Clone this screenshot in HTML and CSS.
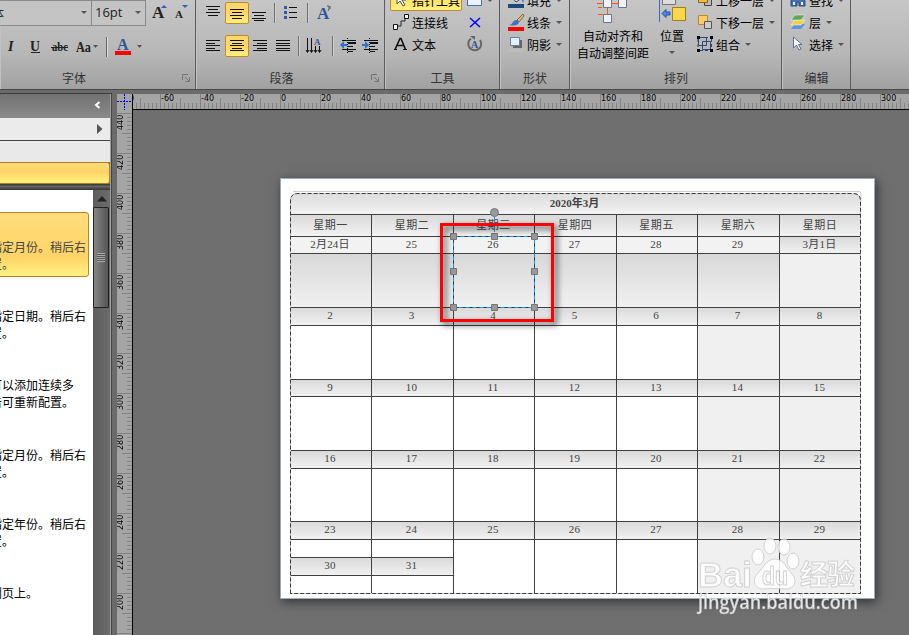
FILE: index.html
```html
<!DOCTYPE html>
<html lang="zh-CN">
<head>
    <meta charset="UTF-8">
    <meta name="viewport" content="width=device-width, initial-scale=1.0">
    <title>2020年3月</title>
    <link rel="stylesheet" href="styles.css">
</head>
<body>
    <!-- Ribbon -->
    <div class="ribbon">
        <div class="group group-font">
            <div class="row row-top">
                <div class="select select-font"><span>体</span><i class="arrow"></i></div>
                <div class="select select-size"><span>16pt</span><i class="arrow"></i></div>
                <svg class="icon-sizes" width="40" height="20">
                    <text x="4" y="15" class="serif-a" font-size="17">A</text>
                    <path d="M13 5l3-3 3 3z" fill="#2b5fc0"/>
                    <text x="27" y="15" class="serif-a" font-size="11">A</text>
                    <path d="M34 2h6l-3 3z" fill="#2b5fc0"/>
                </svg>
            </div>
            <div class="row row-bottom">
                <svg width="195" height="26">
                    <text x="8" y="18" class="serif-a" font-size="14" font-style="italic">I</text>
                    <text x="30" y="18" class="serif-a" font-size="14" textLength="10" lengthAdjust="spacingAndGlyphs">U</text>
                    <path d="M31 19.500h9" stroke="#222"/>
                    <text x="52" y="18" class="serif-a" font-size="12" textLength="16" lengthAdjust="spacingAndGlyphs">abc</text>
                    <path d="M51 14.500h17" stroke="#222"/>
                    <text x="76" y="19" class="serif-a" font-size="14" textLength="15" lengthAdjust="spacingAndGlyphs">Aa</text>
                    <path d="M93 12h5l-2.500 3z" fill="#555"/>
                    <path d="M106.500 4v20" stroke="#666"/>
                    <path d="M107.500 4v20" stroke="#ddd"/>
                    <text x="117" y="17" class="blue-a" font-size="16">A</text>
                    <path d="M115 18h16v4h-16z" fill="#f00"/>
                    <path d="M137 12h5l-2.500 3z" fill="#555"/>
                </svg>
            </div>
            <div class="group-title">字体</div>
            <svg class="launcher" width="8" height="8"><path d="M.5 6V.5H6M3.500 7.500h4v-4M3 3l4 4" stroke="#777" fill="none"/></svg>
        </div>

        <div class="group group-paragraph">
            <div class="row row-top">
                <svg class="tool" width="24" height="22"><path d="M5 4.500h14M7 7.500h10M5 10.500h14M7 13.500h10" stroke="#111"/></svg>
                <svg class="tool active" width="24" height="22"><path d="M4 6.500h14M6 9.500h10M4 12.500h14M6 15.500h10" stroke="#111"/></svg>
                <svg class="tool" width="24" height="22"><path d="M3 10.500h14M5 13.500h10M3 16.500h14M5 18.500h10" stroke="#111"/></svg>
                <i class="divider"></i>
                <svg class="tool tool-list" width="24" height="22"><path d="M10 5.500h8M10 10.500h8M10 15.500h8" stroke="#111"/><path d="M5 4h3v3H5zM5 9h3v3H5zM5 14h3v3H5z" fill="#2e5cb0"/></svg>
                <i class="divider divider-list"></i>
                <svg class="tool tool-fx" width="24" height="22"><text x="4" y="17" class="blue-a" font-size="17">A</text><path d="M14 4h2v3l-1 2M17 4v3" stroke="#555" fill="none"/></svg>
            </div>
            <div class="row row-bottom">
                <svg class="tool" width="24" height="22"><path d="M5 5.500h14M5 8.500h9M5 10.500h14M5 13.500h9M5 15.500h14" stroke="#111"/></svg>
                <svg class="tool active" width="24" height="22"><path d="M4 4.500h14M6 7.500h10M4 9.500h14M6 12.500h10M4 14.500h14" stroke="#111"/></svg>
                <svg class="tool" width="24" height="22"><path d="M4 5.500h14M8 8.500h10M4 10.500h14M8 13.500h10M4 15.500h14" stroke="#111"/></svg>
                <svg class="tool" width="24" height="22"><path d="M3 5.500h14M3 8.500h14M3 10.500h14M3 13.500h14M3 15.500h14" stroke="#111"/></svg>
                <i class="divider"></i>
                <svg class="tool tool-columns" width="24" height="22"><path d="M5.500 3v14M9.500 3v14M13.500 11v6M17.500 11v6M4 15l1.500 2.500L7 15M8 15l1.500 2.500 1.500-2.500M12 15l1.500 2.500 1.500-2.500M16 15l1.500 2.500 1.500-2.500" stroke="#111" fill="none"/><text x="12" y="10" class="blue-a" font-size="9">A</text></svg>
                <i class="divider divider-indent"></i>
                <svg class="tool tool-indent" width="22" height="22"><path d="M8 5.500h14M14 8.500h8M14 11.500h5M8 14.500h14M14 16.500h5" stroke="#111"/><path d="M13.500 3v16" stroke="#111" stroke-dasharray="1 1"/><path d="M14 8h8" stroke="#111" stroke-width="2"/><path d="M6 10l4-4v3h3v2h-3v3z" fill="#2e6fd0"/></svg>
                <svg class="tool tool-indent" width="22" height="22"><path d="M8 5.500h14M14 8.500h8M14 11.500h5M8 14.500h14M14 16.500h5" stroke="#111"/><path d="M13.500 3v16" stroke="#111" stroke-dasharray="1 1"/><path d="M14 8h8" stroke="#111" stroke-width="2"/><path d="M13 10l-4-4v3H6v2h3v3z" fill="#2e6fd0"/></svg>
            </div>
            <div class="group-title">段落</div>
            <svg class="launcher" width="8" height="8"><path d="M.5 6V.5H6M3.500 7.500h4v-4M3 3l4 4" stroke="#777" fill="none"/></svg>
        </div>

        <div class="group group-tools">
            <div class="menus">
                <div class="menu">
                    <div class="item item-active"><svg width="18" height="18"><path d="M5 1v12l3-3 3 5 2-1-3-5h4z" fill="#fff" stroke="#456"/></svg>指针工具</div>
                    <div class="item"><svg width="18" height="18"><path d="M4 13h5V8h4V4h2" stroke="#222" fill="none"/><path d="M1.500 11.500h4v5h-4zM12.500 1.500h4v4h-4z" fill="#fff" stroke="#111"/></svg>连接线</div>
                    <div class="item"><svg width="18" height="18"><path d="M3 14.500L8 3.500h1L13.500 14.500M5 10.500h7" stroke="#111" stroke-width="1.600" fill="none"/><path d="M2 14.500h3M11 14.500h4" stroke="#111"/></svg>文本</div>
                </div>
                <div class="menu menu-extra">
                    <div class="item"><svg width="18" height="18"><path d="M1.500 3.500h14v11h-14z" fill="#eaf2fb" stroke="#4a6d99"/></svg><i class="arrow"></i></div>
                    <div class="item"><svg width="18" height="18"><path d="M4 5l10 9M14 5L4 14" stroke="#00f" stroke-width="1.500"/></svg></div>
                    <div class="item"><svg width="18" height="18"><path d="M5 3.500A6.500 6.500 0 1 0 14 5" stroke="#666" stroke-width="2" fill="none"/><path d="M4 1h5v4z" fill="#666"/><text x="5" y="13" class="blue-a" font-size="10">A</text></svg></div>
                </div>
            </div>
            <div class="group-title">工具</div>
        </div>

        <div class="group group-shape">
            <div class="menus">
                <div class="menu">
                    <div class="item"><svg width="18" height="18"><path d="M5 6l6-4 4 5-6 4z" fill="#eef" stroke="#345"/><path d="M14 6c3 2 3 4 2 6z" fill="#2e6fd0"/><path d="M1 13h16v4H1z" fill="#1f497d"/></svg>填充<i class="arrow"></i></div>
                    <div class="item"><svg width="18" height="18"><path d="M10 7l6-6 1 2-5 6z" fill="#e6b070" stroke="#864"/><path d="M2 12c4 0 3-5 8-5l2 2c-1 4-6 4-10 3z" fill="#3b72c4"/><path d="M1 14h16v4H1z" fill="#f00"/></svg>线条<i class="arrow"></i></div>
                    <div class="item"><svg width="18" height="18"><path d="M6 5h9v8H6z" fill="#666"/><path d="M3.500 2.500h9v8h-9z" fill="#e5efff" stroke="#6a80a0"/><path d="M1 14h16v3H1z" fill="#bcbcbc"/></svg>阴影<i class="arrow"></i></div>
                </div>
            </div>
            <div class="group-title">形状</div>
        </div>

        <div class="group group-arrange">
            <div class="menus">
                <div class="big big-align">
                    <svg width="32" height="26"><path d="M0 3.500h6M14 3.500h8M10.500 7v8M1 7.500h4M1 14.500h5" stroke="#f50"/><path d="M6.500-1.500h8v9h-8zM21.500-1.500h8v9h-8zM6.500 14.500h8v8h-8z" fill="#eef2f8" stroke="#67788f"/></svg>
                    <span>自动对齐和<br>自动调整间距</span>
                </div>
                <div class="big big-place">
                    <svg width="28" height="26"><path d="M1.500 0v22" stroke="#3b6cb5"/><path d="M4.500-2.500h13v7h-13z" fill="#ddd" stroke="#777"/><path d="M4 13.500l4-4v2.500h4v3H8v2.500z" fill="#4a86e8" stroke="#2552a0"/><path d="M14.500 7.500h13v13h-13z" fill="#fbd84b" stroke="#a5800f"/></svg>
                    <span>位置</span>
                    <i class="arrow"></i>
                </div>
                <div class="menu menu-layers">
                    <div class="item"><svg width="18" height="18"><path d="M8.500 7.500h7v7h-7z" fill="#bbb" stroke="#444"/><path d="M2.500 2.500h9v9h-9z" fill="#f7ba42" stroke="#8a6412"/></svg>上移一层<i class="arrow"></i></div>
                    <div class="item"><svg width="18" height="18"><path d="M2.500 2.500h9v9h-9z" fill="#fbcd66" stroke="#b98a2a"/><path d="M8.500 8.500h7v7h-7z" fill="#ccc" stroke="#555"/></svg>下移一层<i class="arrow"></i></div>
                    <div class="item"><svg width="18" height="18"><path d="M2.500 2.500h8v8h-8zM6.500 6.500h8v8h-8z" fill="none" stroke="#2b4a75"/><path d="M2 4v10M4 15.500h10M15.500 4v10M4 2.500h10" stroke="#2b4a75" stroke-dasharray="3 2"/><path d="M1 1h3v3H1zM14 1h3v3h-3zM1 14h3v3H1zM14 14h3v3h-3z" fill="#000"/></svg>组合<i class="arrow"></i></div>
                </div>
            </div>
            <div class="group-title">排列</div>
        </div>

        <div class="group group-edit">
            <div class="menus">
                <div class="menu">
                    <div class="item"><svg width="18" height="18"><path d="M3 4h4v3h3V4h4l2 6v5h-6v-4H8v4H2v-5z" fill="#4470b5" stroke="#28467c"/><path d="M4 11h2v3H4zM12 11h2v3h-2z" fill="#eef"/></svg>查找<i class="arrow"></i></div>
                    <div class="item"><svg width="18" height="18"><path d="M6 11h10l-4 5H2z" fill="#5b93ea"/><path d="M6 7h10l-4 5H2z" fill="#f6cf3c" stroke="#fff" stroke-width=".5"/><path d="M6 2h10l-4 5H2z" fill="#5ca75a" stroke="#fff" stroke-width=".5"/></svg>层<i class="arrow"></i></div>
                    <div class="item"><svg width="18" height="18"><path d="M4.500 2v11l3-3 2.500 5 2-1-2.500-4.500H13z" fill="#fff" stroke="#56708f"/></svg>选择<i class="arrow"></i></div>
                </div>
            </div>
            <div class="group-title">编辑</div>
        </div>
    </div>

    <div class="workspace">
        <!-- Shape library panel -->
        <div class="panel">
            <div class="panel-header"><svg width="8" height="10"><path d="M6.500 2L3 5l3.500 3" stroke="#fff" stroke-width="2" fill="none"/></svg></div>
            <div class="panel-search"><svg width="6" height="10"><path d="M0 0v10l5.500-5z" fill="#555"/></svg></div>
            <div class="panel-space"></div>
            <div class="panel-tab"></div>
            <div class="panel-bar"></div>
            <div class="panel-body">
                <div class="shape-list">
                    <div class="shape-item selected"><p>指定月份。稍后右<br>置。</p></div>
                    <div class="shape-item"><p>指定日期。稍后右<br>置。</p></div>
                    <div class="shape-item"><p>可以添加连续多<br>击可重新配置。</p></div>
                    <div class="shape-item"><p>指定月份。稍后右<br>置。</p></div>
                    <div class="shape-item"><p>指定年份。稍后右<br>置。</p></div>
                    <div class="shape-item"><p>到页上。</p></div>
                </div>
                <div class="scrollbar">
                    <div class="scroll-up"><svg width="10" height="6"><path d="M0 5.500L5 0l5 5.500z" fill="#222"/></svg></div>
                    <div class="scroll-thumb"><i></i></div>
                </div>
            </div>
        </div>

        <div class="side-rail">
            <svg class="origin" width="15" height="16"><path d="M7.500 0v16M0 7.500h15" stroke="#00f" stroke-dasharray="2 1"/></svg>
            <div class="ruler-v">
                <span>440</span><span>420</span><span>400</span><span>380</span><span>360</span><span>340</span><span>320</span>
                <span>300</span><span>280</span><span>260</span><span>240</span><span>220</span><span>200</span><span>180</span>
            </div>
        </div>

        <div class="stage">
            <div class="ruler-h">
                <span class="cut">-80</span><span>-60</span><span>-40</span><span>-20</span><span>0</span><span>20</span><span>40</span><span>60</span><span>80</span>
                <span>100</span><span>120</span><span>140</span><span>160</span><span>180</span><span>200</span><span>220</span>
                <span>240</span><span>260</span><span>280</span><span>300</span>
            </div>
            <div class="canvas">
                <div class="page">
                    <div class="calendar">
                        <div class="month">2020年3月</div>
                        <div class="weekday">星期一</div><div class="weekday">星期二</div><div class="weekday">星期三</div><div class="weekday">星期四</div><div class="weekday">星期五</div><div class="weekday">星期六</div><div class="weekday">星期日</div>

                        <div class="date prev">2月24日</div><div class="date prev">25</div><div class="date prev">26</div><div class="date prev">27</div><div class="date prev">28</div><div class="date prev">29</div><div class="date">3月1日</div>
                        <div class="box prev-box"></div><div class="box prev-box"></div><div class="box prev-box"></div><div class="box prev-box"></div><div class="box prev-box"></div><div class="box prev-box"></div><div class="box weekend"></div>

                        <div class="date">2</div><div class="date">3</div><div class="date">4</div><div class="date">5</div><div class="date">6</div><div class="date">7</div><div class="date">8</div>
                        <div class="box"></div><div class="box"></div><div class="box"></div><div class="box"></div><div class="box"></div><div class="box weekend"></div><div class="box weekend"></div>

                        <div class="date">9</div><div class="date">10</div><div class="date">11</div><div class="date">12</div><div class="date">13</div><div class="date">14</div><div class="date">15</div>
                        <div class="box"></div><div class="box"></div><div class="box"></div><div class="box"></div><div class="box"></div><div class="box weekend"></div><div class="box weekend"></div>

                        <div class="date">16</div><div class="date">17</div><div class="date">18</div><div class="date">19</div><div class="date">20</div><div class="date">21</div><div class="date">22</div>
                        <div class="box"></div><div class="box"></div><div class="box"></div><div class="box"></div><div class="box"></div><div class="box weekend"></div><div class="box weekend"></div>

                        <div class="date">23</div><div class="date">24</div><div class="date">25</div><div class="date">26</div><div class="date">27</div><div class="date">28</div><div class="date">29</div>
                        <div class="box split"><div class="date">30</div></div><div class="box split"><div class="date">31</div></div><div class="box"></div><div class="box"></div><div class="box"></div><div class="box weekend"></div><div class="box weekend"></div>
                    </div>
                    <svg class="calendar-outline" width="573" height="403">
                        <path d="M3 .5h566q2 0 2 2v8" stroke="#ccc" fill="none"/>
                        <path d="M.5 402.500V10q0-7.500 7.500-7.500h555q7.500 0 7.500 7.500v392.500z" stroke="#d0d0d0" fill="none"/>
                        <path d="M.5 402.500V10q0-7.500 7.500-7.500h555q7.500 0 7.500 7.500v392.500z" stroke="#3a3a3a" stroke-dasharray="4 2" fill="none"/>
                    </svg>
                </div>
            </div>
        </div>
    </div>

    <!-- Selected shape and its handles -->
    <svg class="selection" width="92" height="106">
        <path d="M46.500 9v20" stroke="#00a2ff" stroke-dasharray="4 2"/>
        <path d="M5.500 29.500h81v71h-81z" stroke="#333" fill="none"/>
        <path d="M5.500 29.500h81v71h-81z" stroke="#00a2ff" stroke-dasharray="4 3" fill="none"/>
        <circle cx="46.500" cy="5.500" r="4" fill="#999" stroke="#777"/>
        <g fill="#999" stroke="#777">
            <path d="M2.500 26.500h6v6h-6zM43.500 26.500h6v6h-6zM83.500 26.500h6v6h-6z"/>
            <path d="M2.500 61.500h6v6h-6zM83.500 61.500h6v6h-6z"/>
            <path d="M2.500 97.500h6v6h-6zM43.500 97.500h6v6h-6zM83.500 97.500h6v6h-6z"/>
        </g>
    </svg>
    <div class="highlight"></div>

    <!-- Watermark -->
    <svg class="watermark" width="170" height="80">
        <g fill="#fff" stroke="#ccc" stroke-width="1">
            <ellipse cx="63" cy="22" rx="6" ry="8"/>
            <ellipse cx="75" cy="11" rx="6" ry="8"/>
            <ellipse cx="89" cy="12" rx="6" ry="8"/>
            <ellipse cx="98" cy="26" rx="6" ry="8"/>
            <path d="M80 24c9 0 11 9 17 15 6 7 2 15-6 15-6 0-16-1-22 0-8 1-13-8-7-15 6-5 9-15 18-15z"/>
            <text x="3" y="52" class="mark-latin" font-size="35" textLength="54" lengthAdjust="spacingAndGlyphs">Bai</text>
            <text x="67" y="50" class="mark-latin" font-size="25" textLength="26" lengthAdjust="spacingAndGlyphs">du</text>
            <text x="105" y="50" class="mark-cjk" font-size="28" textLength="55">经验</text>
        </g>
        <text x="3" y="74" class="mark-url" textLength="160" lengthAdjust="spacingAndGlyphs">jingyan.baidu.com</text>
    </svg>
</body>
</html>
```

FILE: styles.css
```css
* {
    box-sizing: border-box;
}

body {
    margin: 0;
    width: 909px;
    height: 635px;
    overflow: hidden;
    position: relative;
    font-family: "Noto Sans CJK SC", sans-serif;
    font-size: 12px;
    color: #000;
    background: #6f6f6f;
}

svg {
    display: block;
    flex: none;
}

p {
    margin: 0;
}

/* Ribbon */
.ribbon {
    display: flex;
    height: 90px;
    background: linear-gradient(#c6c6c6, #b7b7b7 60%, #a1a1a1);
    border-bottom: 1px solid #484848;
}

.group {
    display: flex;
    flex-direction: column;
    position: relative;
    height: 89px;
    overflow: hidden;
    border-right: 1px solid #5c5c5c;
    box-shadow: inset 1px 0 #c2c2c2;
}

.group-font { width: 196px; }
.group-paragraph { width: 189px; }
.group-tools { width: 115px; }
.group-shape { width: 70px; }
.group-arrange { width: 212px; }
.group-edit { width: 69px; }

.group-title {
    margin-top: auto;
    height: 21px;
    line-height: 20px;
    padding-left: 1px;
    text-align: center;
    color: #333;
}

.group-font .group-title {
    padding-right: 48px;
}

.group-paragraph .group-title {
    padding-right: 18px;
}

.launcher {
    position: absolute;
    right: 5px;
    bottom: 7px;
}

.row {
    display: flex;
    align-items: center;
    height: 26px;
    flex: none;
}

.row-bottom {
    margin-top: 7px;
}

.select {
    display: flex;
    align-items: center;
    justify-content: space-between;
    height: 26px;
    padding: 0 4px 2px;
    border: 1px solid #8a8a8a;
    background: #c4c4c4;
    font-family: "Open Sans", "Noto Sans CJK SC", sans-serif;
    font-size: 13px;
    color: #222;
}

.select-font {
    width: 93px;
    margin-left: -1px;
}

.select-font span {
    margin-left: -13px;
}

.select-size {
    width: 55px;
    margin-left: -1px;
    padding-left: 3px;
}

.icon-sizes {
    margin-left: 2px;
    overflow: visible;
}

.arrow {
    width: 0;
    height: 0;
    border: 3px solid transparent;
    border-top: 3px solid #555;
    border-bottom: 0;
}

.serif-a {
    font-family: "Liberation Serif", serif;
    font-weight: bold;
    fill: #222;
}

.blue-a {
    font-family: "Liberation Serif", serif;
    font-weight: bold;
    fill: #2f559b;
}

.group-paragraph .row {
    padding-left: 5px;
}

.tool.active {
    border: 1px solid #c08a2b;
    border-radius: 2px;
    background: linear-gradient(#ffd869, #ffd46a 50%, #fff07a);
    margin-top: -1px;
}

.divider {
    width: 2px;
    height: 20px;
    flex: none;
    margin-left: 1px;
    background: linear-gradient(to right, #707070 50%, #d0d0d0 50%);
}

.tool-list {
    margin-left: 3px;
}

.divider-list {
    margin-left: 4px;
}

.tool-fx {
    margin-left: 4px;
}

.tool-columns {
    margin-left: 2px;
}

.divider-indent {
    margin-left: 6px;
}

/* Three-row menus */
.menus {
    display: flex;
    margin-top: -11px;
    height: 67px;
}

.menu {
    display: flex;
    flex-direction: column;
}

.item {
    display: flex;
    align-items: center;
    height: 22px;
    white-space: nowrap;
}

.item svg {
    margin-right: 2px;
}

.item .arrow {
    margin-left: 5px;
}

.group-tools .menus {
    padding-left: 5px;
}

.group-tools .menu:first-child {
    width: 76px;
}

.group-tools .item {
    padding-left: 2px;
}

.group-tools .item-active {
    width: 72px;
    border: 1px solid #c08a2b;
    border-radius: 2px;
    background: linear-gradient(#ffd869, #fff07a);
    padding-left: 1px;
}

.group-tools .menu-extra .item {
    padding-left: 0;
}

.group-tools .arrow {
    margin-left: 1px;
}

.group-shape .menus {
    padding-left: 7px;
}

.big {
    display: flex;
    flex-direction: column;
    align-items: center;
    padding-top: 11px;
    line-height: 17px;
    text-align: center;
}

.big svg {
    height: 27px;
}

.big-align {
    width: 86px;
    white-space: nowrap;
}

.big-place {
    width: 30px;
    margin-left: 1px;
}

.big-place .arrow {
    margin-top: 7px;
}

.menu-layers {
    margin-left: 9px;
}

.group-edit .menus {
    padding-left: 7px;
}

/* Workspace */
.workspace {
    display: flex;
    height: 545px;
    padding-top: 3px;
    background: #6b6b6b;
}

.panel {
    display: flex;
    flex-direction: column;
    width: 112px;
    height: 542px;
    flex: none;
    border-top: 1px solid #3d3d3d;
    border-right: 1px solid #454545;
    box-shadow: inset -1px 0 #a0a0a0;
    padding-right: 1px;
}

.panel-header {
    display: flex;
    align-items: center;
    justify-content: flex-end;
    height: 24px;
    padding: 0 9px 3px 0;
    background: linear-gradient(#727272, #8a8a8a);
}

.panel-search {
    display: flex;
    align-items: center;
    justify-content: flex-end;
    height: 23px;
    padding-right: 7px;
    background: #ebebeb;
    border-bottom: 1px solid #444;
}

.panel-space {
    height: 21px;
    background: #e9e9e9;
}

.panel-tab {
    height: 22px;
    border: 1px solid #b77d24;
    border-left: 0;
    border-radius: 0 3px 3px 0;
    background: linear-gradient(#ffdc76, #ffd468 45%, #fff27d);
}

.panel-bar {
    height: 6px;
    background: linear-gradient(#333, #666 40%, #333);
}

.panel-body {
    display: flex;
    flex: 1;
    min-height: 0;
}

.shape-list {
    width: 93px;
    padding-top: 22px;
    background: #fff;
    overflow: hidden;
}

.shape-item {
    height: 65px;
    margin-bottom: 4.2px;
    padding-top: 25px;
    border: 1px solid transparent;
    line-height: 17px;
    white-space: nowrap;
}

.shape-item p {
    margin-left: -11px;
}

.shape-item.selected {
    width: 92px;
    margin-left: -3px;
    border-color: #bb862b;
    border-radius: 3px;
    background: linear-gradient(#ffdd7c, #ffd467 70%, #fff181);
    color: #444;
}

.shape-item.selected p {
    margin-left: -8px;
}

.scrollbar {
    width: 17px;
    background: linear-gradient(to right, #5d5d5d, #6c6c6c);
}

.scroll-up {
    display: flex;
    align-items: center;
    justify-content: center;
    height: 17px;
}

.scroll-thumb {
    display: flex;
    align-items: center;
    justify-content: center;
    width: 16px;
    height: 101px;
    border: 1px solid #222;
    border-radius: 1px;
    background: linear-gradient(to right, #858585, #555);
}

.scroll-thumb i {
    width: 8px;
    height: 9px;
    background: repeating-linear-gradient(#aaa 0 1px, #555 1px 2px);
}

/* Rulers */
.side-rail {
    width: 21px;
    flex: none;
    padding: 1px 0 0 5px;
}

.origin {
    background: #a5a5a5;
}

.ruler-v {
    height: 525px;
    overflow: hidden;
    border-right: 1px solid #000;
    padding-top: 3px;
    background:
        repeating-linear-gradient(transparent 0 3px, #828282 3px 4px, transparent 4px 40px),
        repeating-linear-gradient(transparent 0 23px, #828282 23px 24px, transparent 24px 40px) 5px 0 no-repeat,
        repeating-linear-gradient(transparent 0 3px, #828282 3px 4px) 10px 0 no-repeat,
        #a5a5a5;
}

.ruler-v span {
    display: block;
    height: 40px;
    width: 9px;
    writing-mode: vertical-rl;
    transform: rotate(180deg);
    text-align: right;
    padding-bottom: 2px;
}

.ruler-v span,
.ruler-h span {
    font-family: "DejaVu Sans", sans-serif;
    font-size: 8px;
    line-height: 8px;
}

.stage {
    flex: 1;
    min-width: 0;
}

.ruler-h {
    display: flex;
    height: 16px;
    margin-top: 1px;
    margin-left: -1px;
    overflow: hidden;
    border-bottom: 1px solid #000;
    border-left: 1px solid #000;
    background:
        repeating-linear-gradient(to right, transparent 0 27px, #828282 27px 28px, transparent 28px 40px),
        repeating-linear-gradient(to right, transparent 0 7px, #828282 7px 8px, transparent 8px 40px) 0 4px no-repeat,
        repeating-linear-gradient(to right, transparent 0 3px, #828282 3px 4px) 0 9px no-repeat,
        #a5a5a5;
}

.ruler-h span {
    width: 40px;
    flex: none;
    padding: 1px 0 0 1px;
}

.ruler-h .cut {
    margin-left: -13px;
}

.canvas {
    height: 525px;
    padding: 68px 0 0 147px;
    background: #6f6f6f;
}

/* Page */
.page {
    position: relative;
    width: 595px;
    height: 421px;
    padding: 14px 0 0 9px;
    background: #fff;
    border: 1px solid #9daab8;
    box-shadow: 2px 3px 10px rgba(0, 0, 0, 0.55);
}

.calendar {
    display: grid;
    grid-template-columns: 81px 82px 81px 82px 81px 82px 82px;
    grid-template-rows: 21px 22px 17px 54px 18px 54px 17px 54px 18px 53px 18px 55px;
    width: 571px;
    height: 401px;
    overflow: hidden;
    border-radius: 8px 8px 0 0;
    font-family: "Liberation Serif", "Noto Sans CJK SC", serif;
    font-size: 11px;
    color: #444;
}

.month {
    grid-column: 1 / 8;
    font-weight: bold;
    line-height: 20px;
    padding-right: 2px;
    text-align: center;
    background: linear-gradient(#dcdcdc, #f2f2f2);
}

.weekday {
    line-height: 20px;
    padding-right: 1px;
    text-align: center;
    letter-spacing: 0.5px;
    background: linear-gradient(#dadada, #f2f2f2);
}

.weekday,
.date,
.box {
    border-top: 1px solid #404040;
    border-left: 1px solid #404040;
}

.date {
    line-height: 15px;
    padding-right: 2px;
    text-align: center;
    letter-spacing: 0.2px;
    background: linear-gradient(#dadada, #f1f1f1);
}

.date.prev {
    background: #f2f2f2;
}

.prev-box {
    background: linear-gradient(#d8d8d8, #f1f1f1);
}

.weekend {
    background: #f0f0f0;
}

.split {
    padding-top: 17px;
}

.split .date {
    height: 19px;
    border-left: 0;
    border-bottom: 1px solid #404040;
}

.calendar-outline {
    position: absolute;
    left: 9px;
    top: 12px;
}

/* Selection and red frame */
.selection {
    position: absolute;
    left: 448px;
    top: 207px;
}

.highlight {
    position: absolute;
    left: 440px;
    top: 223px;
    width: 114px;
    height: 99px;
    border: 3px solid #f00;
    filter: drop-shadow(3px 3px 3px rgba(0, 0, 0, 0.75));
}

/* Watermark */
.watermark {
    position: absolute;
    left: 695px;
    top: 535px;
    opacity: 0.85;
}

.mark-latin {
    font-family: "Liberation Sans", sans-serif;
    font-weight: bold;
}

.mark-cjk {
    font-family: "Noto Sans CJK SC", sans-serif;
    font-weight: bold;
}

.mark-url {
    font-family: "Open Sans", sans-serif;
    font-size: 19px;
    font-weight: 600;
    fill: #fff;
    stroke: #bbb;
    stroke-width: 0.4px;
}
```
